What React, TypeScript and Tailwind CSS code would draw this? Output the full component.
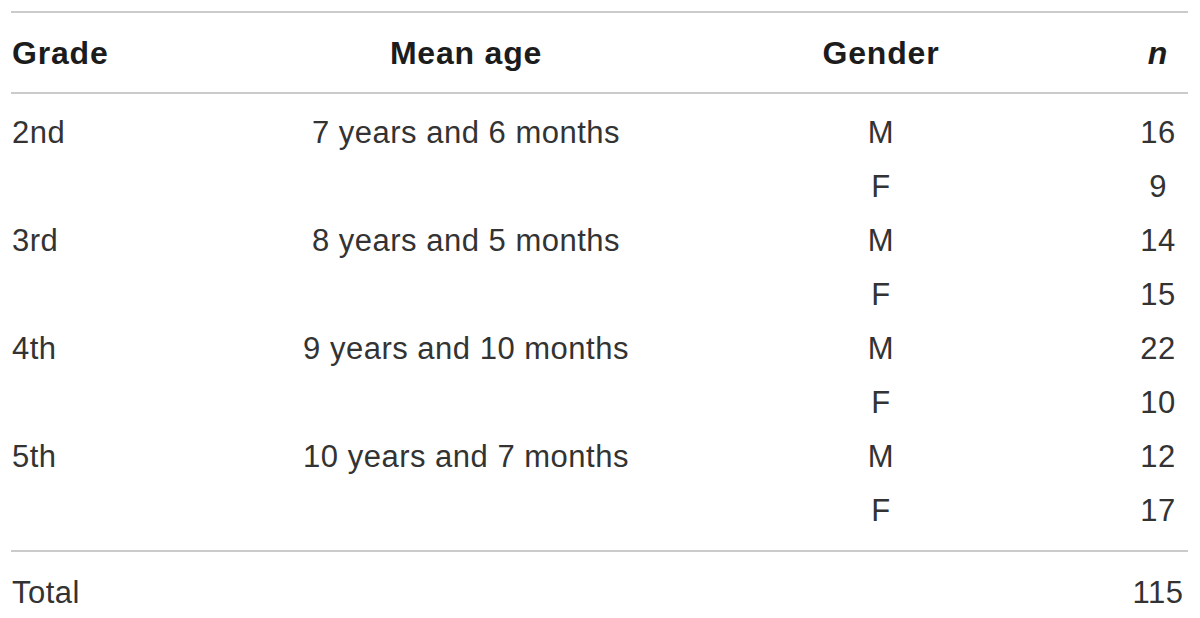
import React from 'react';

const groups = [
  { grade: '2nd', age: '7 years and 6 months', m: 16, f: 9 },
  { grade: '3rd', age: '8 years and 5 months', m: 14, f: 15 },
  { grade: '4th', age: '9 years and 10 months', m: 22, f: 10 },
  { grade: '5th', age: '10 years and 7 months', m: 12, f: 17 },
];

const cols = 'grid grid-cols-[287px_336px_494px_60px]';

export default function App() {
  return (
    <div
      className="w-[1200px] h-[618px] bg-white overflow-hidden pt-[11px] pl-[11px]"
      style={{ fontFamily: '"Liberation Sans", Arial, Helvetica, sans-serif' }}
    >
      <div className="w-[1177px]">
        {/* Header */}
        <div className={`${cols} h-[83px] border-t-2 border-b-2 border-[#cbcbcb] items-center text-[32px] font-bold tracking-[0.8px] text-[#1c1c1c]`}>
          <div className="pl-[1px]">Grade</div>
          <div className="text-center">Mean age</div>
          <div className="text-center">Gender</div>
          <div className="text-center italic">n</div>
        </div>

        {/* Body */}
        <div className="py-[12px] text-[31px] tracking-[0.5px] text-[#333333]">
          {groups.map((g) => (
            <div key={g.grade} className={cols}>
              <div className="h-[54px] flex items-center pl-[1px]">{g.grade}</div>
              <div className="h-[54px] flex items-center justify-center">{g.age}</div>
              <div className="h-[54px] flex items-center justify-center">M</div>
              <div className="h-[54px] flex items-center justify-center">{g.m}</div>
              <div className="h-[54px]" />
              <div className="h-[54px]" />
              <div className="h-[54px] flex items-center justify-center">F</div>
              <div className="h-[54px] flex items-center justify-center">{g.f}</div>
            </div>
          ))}
        </div>

        {/* Total */}
        <div className={`${cols} border-t-2 border-[#cbcbcb] h-[84px] items-center text-[31px] tracking-[0.5px] text-[#333333]`}>
          <div className="pl-[1px]">Total</div>
          <div />
          <div />
          <div className="text-center">115</div>
        </div>
      </div>
    </div>
  );
}
